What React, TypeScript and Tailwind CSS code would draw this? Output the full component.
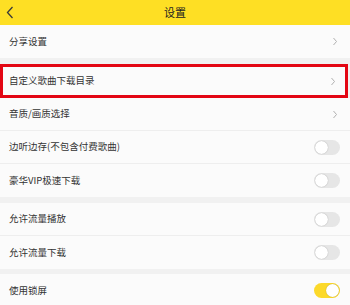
import React from 'react';

type Item = { label: string; kind: 'link' | 'toggle'; on?: boolean; marked?: boolean };

const groups: Item[][] = [
  [{ label: '分享设置', kind: 'link' }],
  [
    { label: '自定义歌曲下载目录', kind: 'link', marked: true },
    { label: '音质/画质选择', kind: 'link' },
    { label: '边听边存(不包含付费歌曲)', kind: 'toggle' },
    { label: '豪华VIP极速下载', kind: 'toggle' },
  ],
  [
    { label: '允许流量播放', kind: 'toggle' },
    { label: '允许流量下载', kind: 'toggle' },
  ],
  [{ label: '使用锁屏', kind: 'toggle', on: true }],
];

const Toggle: React.FC<{ on?: boolean }> = ({ on }) => (
  <div
    className={
      on
        ? 'w-[26px] h-[15px] rounded-full bg-[#fcd92a] flex items-center justify-end px-[1px]'
        : 'w-[26px] h-[15px] rounded-full bg-[#e6e6e6] flex items-center justify-start px-[1px]'
    }
  >
    <div className="w-[13px] h-[13px] rounded-full bg-white shadow-[0_0_1px_rgba(0,0,0,0.35)]" />
  </div>
);

const Chevron = () => (
  <svg width="6" height="9" viewBox="0 0 6 9" fill="none">
    <path d="M1.5 1L4.5 4.5L1.5 8" stroke="#a8a8a8" strokeWidth="0.9" />
  </svg>
);

const App: React.FC = () => {
  return (
    <div
      className="w-[350px] h-[305px] overflow-hidden bg-[#f1f1f1] text-[#333]"
      style={{ fontFamily: '"Noto Sans CJK SC", "Noto Sans", sans-serif' }}
    >
      <div className="h-[25px] bg-[#fedf24] flex items-center relative">
        <svg className="absolute left-[6px] top-[6px]" width="8" height="13" viewBox="0 0 8 13" fill="none">
          <path d="M6.5 1L1.5 6.5L6.5 12" stroke="#3a3a3a" strokeWidth="1.3" />
        </svg>
        <div className="flex-1 text-center text-[11px] text-[#222] leading-none">设置</div>
      </div>

      {groups.map((group, gi) => (
        <div key={gi} className={gi === 0 ? '' : gi === 3 ? 'mt-[5px]' : 'mt-[6px]'}>
          {group.map((item, i) => (
            <div
              key={item.label}
              className={
                item.marked
                  ? 'h-[34px] w-[348px] bg-[#fbfbfb] border-[3px] border-[#e30613] flex items-center justify-between pl-[6px] pr-[9px]'
                  : i < group.length - 1
                  ? 'h-[33px] bg-[#fbfbfb] border-b border-[#eeeeee] flex items-center justify-between pl-[9px] pr-[12px]'
                  : 'h-[33px] bg-[#fbfbfb] flex items-center justify-between pl-[9px] pr-[12px]'
              }
            >
              <span className="text-[9.5px] leading-none">{item.label}</span>
              {item.kind === 'link' ? <Chevron /> : <div className="-mr-[2px]"><Toggle on={item.on} /></div>}
            </div>
          ))}
        </div>
      ))}
    </div>
  );
};

export default App;
